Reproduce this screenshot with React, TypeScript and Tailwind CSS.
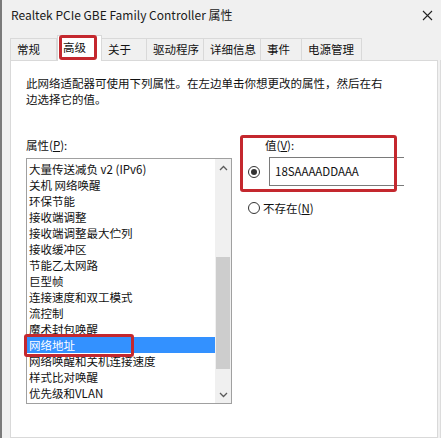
import React from "react";

const FONT = { fontFamily: '"Noto Sans CJK SC", "Noto Sans", sans-serif' };

const TABS = [
  { label: "常规", w: "w-[47px]" },
  { label: "高级", w: "w-[45px]", active: true },
  { label: "关于", w: "w-[45px]" },
  { label: "驱动程序", w: "w-[57px]" },
  { label: "详细信息", w: "w-[57px]" },
  { label: "事件", w: "w-[41px]" },
  { label: "电源管理", w: "w-[60px]" },
];

const ITEMS = [
  "大量传送减负 v2 (IPv6)",
  "关机 网络唤醒",
  "环保节能",
  "接收端调整",
  "接收端调整最大伫列",
  "接收缓冲区",
  "节能乙太网路",
  "巨型帧",
  "连接速度和双工模式",
  "流控制",
  "魔术封包唤醒",
  "网络地址",
  "网络唤醒和关机连接速度",
  "样式比对唤醒",
  "优先级和VLAN",
];

function RedBox({ className }: { className: string }) {
  return (
    <div
      className={`pointer-events-none absolute rounded-[3px] border-[3px] border-[#c4282e] ${className}`}
    />
  );
}

function Chevron({ up }: { up?: boolean }) {
  return (
    <svg width="9" height="6" viewBox="0 0 9 6" className="block">
      <path
        d={up ? "M1 5 L4.5 1.5 L8 5" : "M1 1 L4.5 4.5 L8 1"}
        fill="none"
        stroke="#5a5a5a"
        strokeWidth="1.3"
      />
    </svg>
  );
}

function Radio({ checked }: { checked?: boolean }) {
  return (
    <span className="flex h-[12px] w-[12px] shrink-0 items-center justify-center rounded-full border border-[#333] bg-white">
      {checked && <span className="h-[6px] w-[6px] rounded-full bg-[#333]" />}
    </span>
  );
}

export default function App() {
  return (
    <div
      style={FONT}
      className="flex h-[438px] w-[441px] flex-col overflow-hidden border-l-2 border-[#7a7a7a] bg-[#f0f0f0] text-[11.5px] text-[#111]"
    >
      {/* title bar */}
      <div className="flex h-[30px] items-center justify-between pl-[9px] pr-[8px]">
        <span className="text-[12px] text-[#1a1a1a]">Realtek PCIe GBE Family Controller 属性</span>
        <svg width="11" height="11" viewBox="0 0 11 11">
          <path d="M1 1 L10 10 M10 1 L1 10" stroke="#222" strokeWidth="1.1" />
        </svg>
      </div>

      {/* tabs */}
      <div className="mt-[5px] flex h-[25px] items-end pl-[8px]">
        {TABS.map((t) =>
          t.active ? (
            <div
              key={t.label}
              className={`relative z-10 -mb-px flex h-[26px] ${t.w} items-center border border-b-0 border-[#d9d9d9] bg-white pl-[5px] pb-[2px]`}
            >
              {t.label}
              <RedBox className="left-[1px] top-[-1px] h-[25px] w-[38px]" />
            </div>
          ) : (
            <div
              key={t.label}
              className={`flex h-[22px] ${t.w} items-center border border-b-0 border-l-0 border-[#d9d9d9] bg-[#f0f0f0] pl-[6px] first:border-l`}
            >
              {t.label}
            </div>
          ),
        )}
      </div>

      {/* panel */}
      <div className="flex flex-1">
        <div className="ml-[8px] w-[423px] flex-1 border border-[#d9d9d9] bg-white pl-[15px] pt-[14px]">
          <p className="leading-[16px]">
            此网络适配器可使用下列属性。在左边单击你想更改的属性，然后在右
            <br />
            边选择它的值。
          </p>

          <div className="mt-[30px] flex">
            {/* properties */}
            <div className="w-[206px]">
              <div className="leading-[16px]">
                属性(<span className="underline">P</span>):
              </div>
              <div className="mt-[5px] flex h-[246px] border border-[#a0a0a0]">
                <ul className="flex-1 pt-[2px]">
                  {ITEMS.map((it) =>
                    it === "网络地址" ? (
                      <li key={it} className="relative h-[16px] bg-[#3391ff] pl-[2px] leading-[16px] text-white">
                        {it}
                        <RedBox className="left-[-3px] top-[-3px] h-[23px] w-[110px]" />
                      </li>
                    ) : (
                      <li key={it} className="h-[16px] whitespace-nowrap pl-[2px] leading-[16px]">
                        {it}
                      </li>
                    ),
                  )}
                </ul>
                <div className="flex w-[16px] flex-col items-center bg-[#f0f0f0]">
                  <div className="flex h-[17px] items-center">
                    <Chevron up />
                  </div>
                  <div className="mt-[81px] h-[112px] w-[14px] bg-[#cdcdcd]" />
                  <div className="mt-auto flex h-[17px] items-center">
                    <Chevron />
                  </div>
                </div>
              </div>
            </div>

            {/* value */}
            <div className="relative ml-[16px] flex-1">
              <div className="pl-[17px] leading-[16px]">
                值(<span className="underline">V</span>):
              </div>
              <div className="mt-[4px] flex items-center">
                <Radio checked />
                <div className="ml-[9px] flex h-[29px] w-[135px] items-center border-y border-l border-[#7a7a7a] pl-[5px] text-[11.5px]">
                  18SAAAADDAAA
                </div>
              </div>
              <div className="mt-[14px] flex items-center">
                <Radio />
                <span className="ml-[3px] leading-[16px]">
                  不存在(<span className="underline">N</span>)
                </span>
              </div>
              <RedBox className="left-[-8px] top-[-2px] h-[57px] w-[157px]" />
            </div>
          </div>
        </div>
        <div className="ml-[2px] w-px bg-[#dcdcdc]" />
      </div>
    </div>
  );
}
